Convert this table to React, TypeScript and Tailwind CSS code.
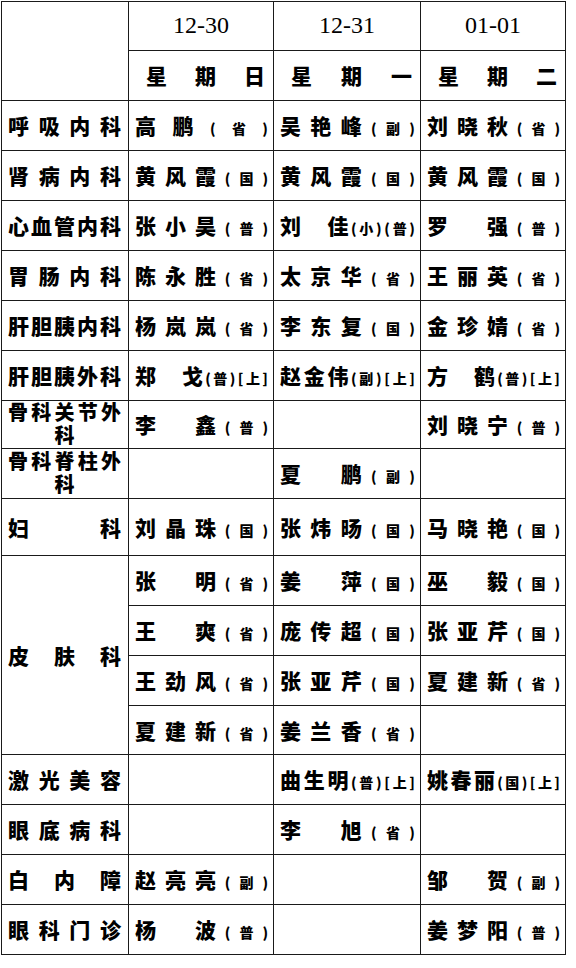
import React from 'react';

// 名字格式：大字|小字，"　" 为全角空格占位
type Row = [string, string, string, string];

const topRows: Row[] = [
  ['呼吸内科', '高鹏|(省)', '吴艳峰|(副)', '刘晓秋|(省)'],
  ['肾病内科', '黄风霞|(国)', '黄风霞|(国)', '黄风霞|(国)'],
  ['心血管内科', '张小昊|(普)', '刘　佳|(小)(普)', '罗　强|(普)'],
  ['胃肠内科', '陈永胜|(省)', '太京华|(省)', '王丽英|(省)'],
  ['肝胆胰内科', '杨岚岚|(省)', '李东复|(国)', '金珍婧|(省)'],
  ['肝胆胰外科', '郑　戈|(普)[上]', '赵金伟|(副)[上]', '方　鹤|(普)[上]'],
];

const skinRows: string[][] = [
  ['张　明|(省)', '姜　萍|(国)', '巫　毅|(国)'],
  ['王　爽|(省)', '庞传超|(国)', '张亚芹|(国)'],
  ['王劲风|(省)', '张亚芹|(国)', '夏建新|(省)'],
  ['夏建新|(省)', '姜兰香|(省)', ''],
];

const bottomRows: Row[] = [
  ['激光美容', '', '曲生明|(普)[上]', '姚春丽|(国)[上]'],
  ['眼底病科', '', '李　旭|(省)', ''],
  ['白内障', '赵亮亮|(副)', '', '邹　贺|(副)'],
  ['眼科门诊', '杨　波|(普)', '', '姜梦阳|(普)'],
];

function Spread({ text }: { text: string }) {
  const [big, small = ''] = text.split('|');
  return (
    <div className="flex w-full items-baseline justify-between">
      {[...big].map((c, i) => (
        <span key={'b' + i} className="text-[21px] leading-none">
          {c}
        </span>
      ))}
      {[...small].map((c, i) => (
        <span key={'s' + i} className="text-[14px] leading-none">
          {c}
        </span>
      ))}
    </div>
  );
}

function Dept({ text }: { text: string }) {
  return (
    <div className="flex items-center bg-white pl-[6px] pr-[7px]">
      <Spread text={text} />
    </div>
  );
}

function Name({ text }: { text: string }) {
  return <div className="flex items-center bg-white pl-[6px] pr-[5px]">{text && <Spread text={text} />}</div>;
}

// 两行的科室名：首行分散对齐，第二行居中
function TwoLineDept({ first }: { first: string }) {
  return (
    <div className="flex items-center bg-white pl-[6px] pr-[7px]">
      <div className="flex w-full flex-col font-['Liberation_Sans','Noto_Sans_CJK_SC',sans-serif] text-[20px] leading-[23px]">
        <div className="flex justify-between">
          {[...first].map((c, i) => (
            <span key={i}>{c}</span>
          ))}
        </div>
        <div className="flex justify-center">
          <span>科</span>
        </div>
      </div>
    </div>
  );
}

export default function App() {
  const dates = ['12-30', '12-31', '01-01'];
  const weeks = ['星期日', '星期一', '星期二'];
  return (
    <div className="min-h-[968px] bg-white font-['Noto_Sans_CJK_SC',sans-serif] font-black text-black">
      <div className="ml-px mt-px inline-grid grid-cols-[126px_144px_146px_144px] grid-rows-[48px_49px_49px_49px_49px_49px_49px_49px_47px_49px_56px_49px_49px_49px_48px_49px_49px_49px_49px] gap-px bg-[#1a1a1a] p-px">
        <div className="row-span-2 bg-white" />
        {dates.map((d) => (
          <div
            key={d}
            className="flex items-center justify-center bg-white pb-[2px] font-['Liberation_Serif',serif] text-[24px] font-normal"
          >
            {d}
          </div>
        ))}
        {weeks.map((w) => (
          <div key={w} className="flex items-center bg-white pl-[17px] pr-[8px]">
            <Spread text={w} />
          </div>
        ))}

        {topRows.map((r) => (
          <React.Fragment key={r[0]}>
            <Dept text={r[0]} />
            <Name text={r[1]} />
            <Name text={r[2]} />
            <Name text={r[3]} />
          </React.Fragment>
        ))}

        <TwoLineDept first="骨科关节外" />
        <Name text="李　鑫|(普)" />
        <Name text="" />
        <Name text="刘晓宁|(普)" />

        <TwoLineDept first="骨科脊柱外" />
        <Name text="" />
        <Name text="夏　鹏|(副)" />
        <Name text="" />

        <Dept text="妇科" />
        <Name text="刘晶珠|(国)" />
        <Name text="张炜旸|(国)" />
        <Name text="马晓艳|(国)" />

        <div className="row-span-4 flex items-center bg-white pl-[6px] pr-[7px]">
          <Spread text="皮肤科" />
        </div>
        {skinRows.map((r, i) => (
          <React.Fragment key={i}>
            {r.map((n, j) => (
              <Name key={j} text={n} />
            ))}
          </React.Fragment>
        ))}

        {bottomRows.map((r) => (
          <React.Fragment key={r[0]}>
            <Dept text={r[0]} />
            <Name text={r[1]} />
            <Name text={r[2]} />
            <Name text={r[3]} />
          </React.Fragment>
        ))}
      </div>
    </div>
  );
}
